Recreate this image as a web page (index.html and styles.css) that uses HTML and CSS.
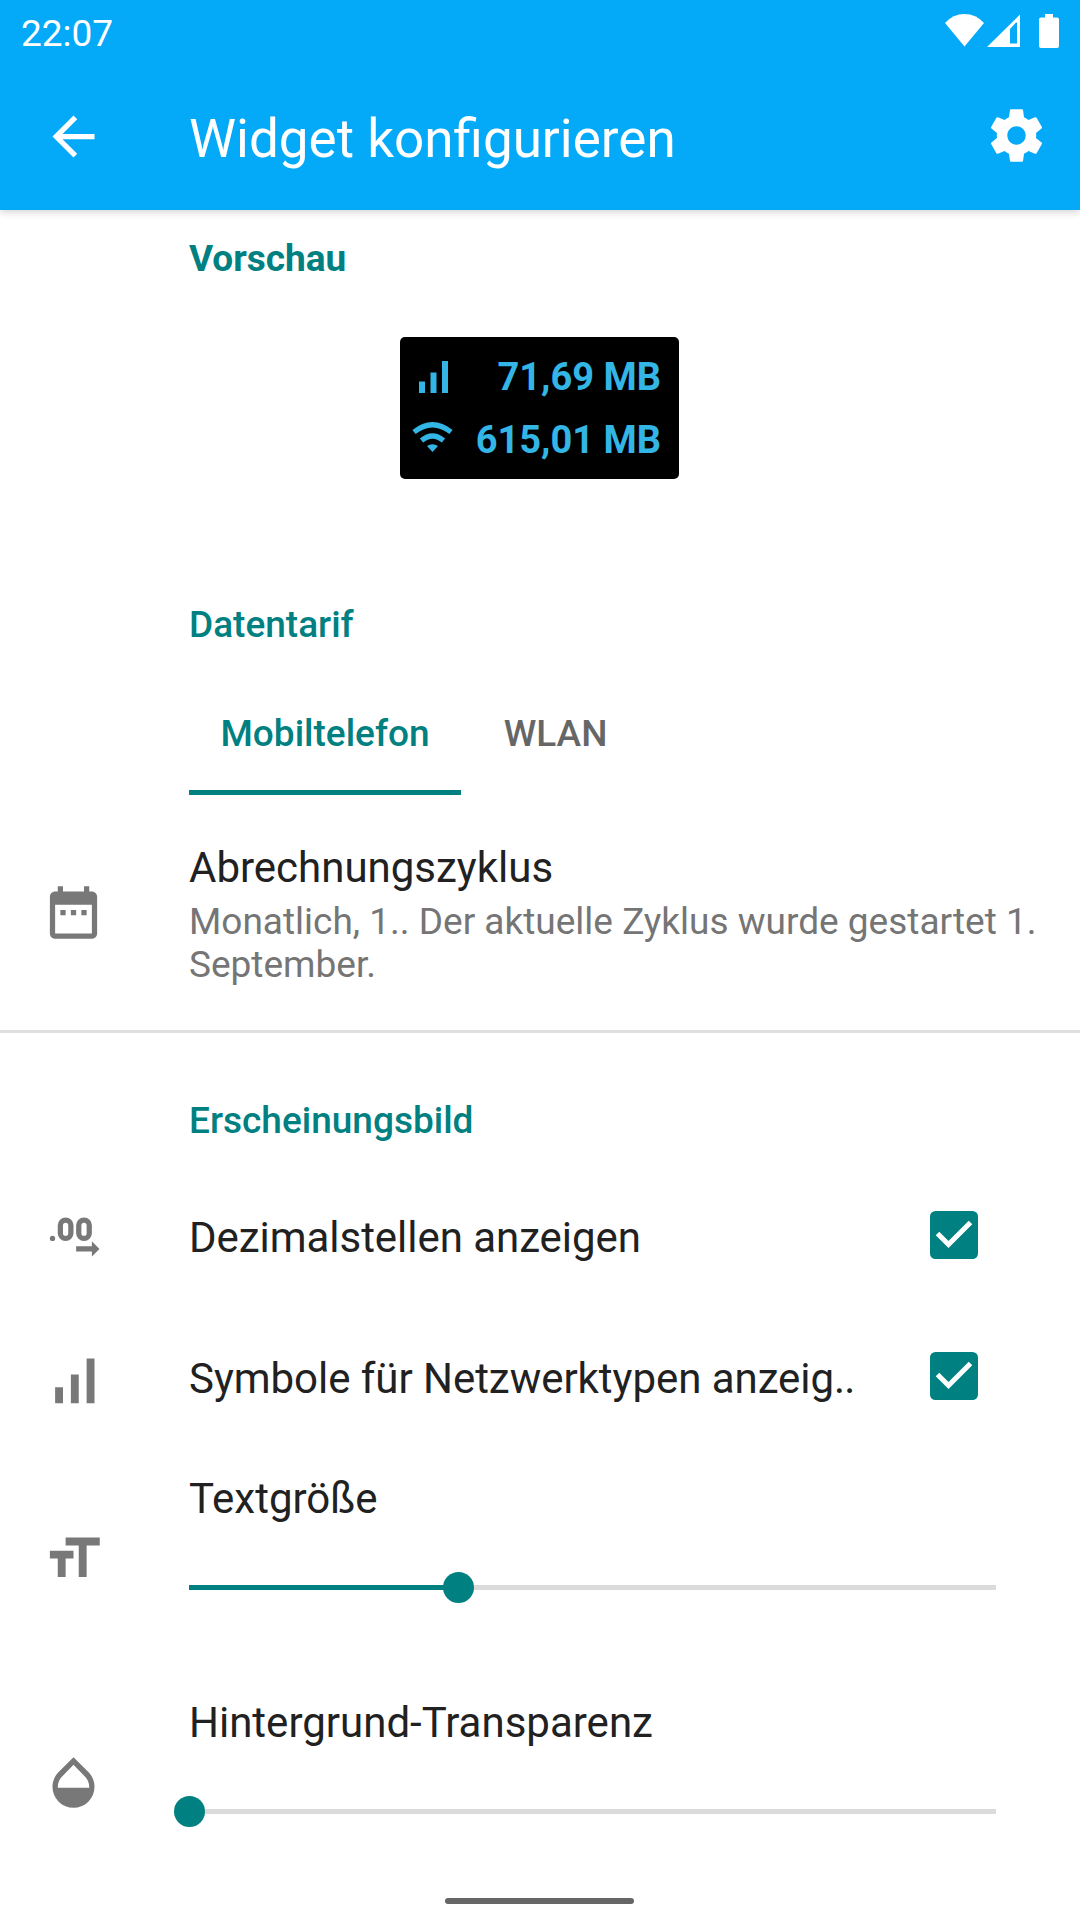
FILE: index.html
```html
<!DOCTYPE html>
<html lang="de">
<head>
<meta charset="utf-8">
<title>Widget konfigurieren</title>
<link rel="stylesheet" href="styles.css">
</head>
<body>
<header class="header">
  <div class="status">
    <span class="time">22:07</span>
    <svg class="status-icons" viewBox="0 0 120 40" aria-hidden="true">
      <path d="M19.500 36.500L0 13Q8 4 19.500 4T39 13z"/>
      <path fill-rule="evenodd" d="M42 37L75 4.500V37zM65 33.500H72V12.500H71L65 19z"/>
      <path d="M100 4h8v3.500h4a2 2 0 0 1 2 2V36a2 2 0 0 1-2 2H96a2 2 0 0 1-2-2V9.500a2 2 0 0 1 2-2h4z"/>
    </svg>
  </div>
  <div class="toolbar">
    <svg class="icon" viewBox="0 0 24 24"><path d="M20 11H7.830l5.590-5.590L12 4l-8 8 8 8 1.410-1.410L7.830 13H20v-2z"/></svg>
    <h1 class="title">Widget konfigurieren</h1>
    <svg class="icon icon-settings" viewBox="0 0 24 24"><path d="M19.430 12.980c.04-.32.07-.64.07-.98s-.03-.66-.07-.98l2.110-1.650c.19-.15.24-.42.12-.64l-2-3.460c-.12-.22-.39-.3-.61-.22l-2.490 1c-.52-.4-1.080-.73-1.690-.98l-.38-2.650C14.460 2.180 14.250 2 14 2h-4c-.25 0-.46.18-.49.42l-.38 2.650c-.61.25-1.170.59-1.690.98l-2.490-1c-.23-.09-.49 0-.61.22l-2 3.460c-.13.22-.07.49.12.64l2.110 1.650c-.04.32-.07.65-.07.98s.03.66.07.98l-2.110 1.650c-.19.15-.24.42-.12.64l2 3.460c.12.22.39.3.61.22l2.490-1c.52.4 1.080.73 1.690.98l.38 2.650c.03.24.24.42.49.42h4c.25 0 .46-.18.49-.42l.38-2.650c.61-.25 1.170-.59 1.690-.98l2.490 1c.23.09.49 0 .61-.22l2-3.460c.12-.22.07-.49-.12-.64l-2.110-1.650zM12 15.500c-1.930 0-3.500-1.570-3.500-3.500s1.570-3.500 3.500-3.500 3.500 1.570 3.500 3.500-1.570 3.500-3.500 3.500z"/></svg>
  </div>
</header>

<main>
  <h2 class="section section-preview">Vorschau</h2>
  <div class="widget">
    <div class="widget-row">
      <svg class="widget-icon" viewBox="0 0 42 42"><path d="M7 25.500h6V37H7zM18.500 16.500h6V37h-6zM30 5h6v32h-6z"/></svg>
      <span>71,69 MB</span>
    </div>
    <div class="widget-row">
      <svg class="widget-icon" viewBox="0 0 42 42">
        <path d="M15 27Q20.500 23.500 26 27L20.500 33z"/>
        <path class="arc" d="M9.500 21.500Q20.500 12.500 31.500 21.500M2 13Q20.500-1.500 39 13"/>
      </svg>
      <span>615,01 MB</span>
    </div>
  </div>

  <h2 class="section section-plan">Datentarif</h2>
  <nav class="tabs">
    <span class="tab tab-active">Mobiltelefon</span>
    <span class="tab">WLAN</span>
  </nav>

  <section class="row row-cycle">
    <svg class="icon" viewBox="0 0 24 24"><path d="M9 11H7v2h2v-2zm4 0h-2v2h2v-2zm4 0h-2v2h2v-2zm2-7h-1V2h-2v2H8V2H6v2H5c-1.110 0-1.990.9-1.990 2L3 20c0 1.100.89 2 2 2h14c1.100 0 2-.9 2-2V6c0-1.100-.9-2-2-2zm0 16H5V9h14v11z"/></svg>
    <div class="cycle-text">
      <div class="label">Abrechnungszyklus</div>
      <div class="summary">Monatlich, 1.. Der aktuelle Zyklus wurde gestartet 1. September.</div>
    </div>
  </section>

  <h2 class="section section-look">Erscheinungsbild</h2>
  <section class="row row-check">
    <svg class="icon" viewBox="0 0 24 24">
      <circle cx="4" cy="13.100" r="1"/>
      <rect class="ring" x="7" y="6.100" width="4" height="7" rx="2"/>
      <rect class="ring" x="14" y="6.100" width="4" height="7" rx="2"/>
      <path d="M13 16.100h6v-1.900l2.900 2.900-2.900 2.900v-1.900h-6z"/>
    </svg>
    <div class="label">Dezimalstellen anzeigen</div>
    <svg class="checkbox" viewBox="0 0 48 48"><rect width="48" height="48" rx="5.500"/><path d="M7.500 22.500L18.500 33.500L40.500 11.500"/></svg>
  </section>
  <section class="row row-check">
    <svg class="icon" viewBox="0 0 24 24"><path d="M5 16.100h3v6.100H5zM11 11.200h3v11h-3zM17 5.100h3v17.100h-3z"/></svg>
    <div class="label">Symbole für Netzwerktypen anzeig<span class="ellipsis">..</span></div>
    <svg class="checkbox" viewBox="0 0 48 48"><rect width="48" height="48" rx="5.500"/><path d="M7.500 22.500L18.500 33.500L40.500 11.500"/></svg>
  </section>
  <section class="row row-slider">
    <svg class="icon" viewBox="0 0 24 24"><path d="M9 4v3h5v12h3V7h5V4H9zm-6 8h3v7h3v-7h3V9H3v3z"/></svg>
    <div class="slider-body">
      <div class="label">Textgröße</div>
      <div class="track"><div class="fill" style="width:33.33%"></div><div class="knob" style="left:33.33%"></div></div>
    </div>
  </section>
  <section class="row row-slider">
    <svg class="icon" viewBox="0 0 24 24"><path d="M17.660 8L12 2.350 6.340 8C4.780 9.560 4 11.640 4 13.640s.78 4.110 2.340 5.670 3.610 2.350 5.660 2.350 4.100-.79 5.660-2.350S20 15.640 20 13.640 19.220 9.560 17.660 8zM6 14c.01-2 .62-3.270 1.760-4.400L12 5.270l4.240 4.380C17.380 10.770 17.990 12 18 14H6z"/></svg>
    <div class="slider-body">
      <div class="label">Hintergrund-Transparenz</div>
      <div class="track"><div class="knob" style="left:0%"></div></div>
    </div>
  </section>
</main>
<div class="home-bar"></div>
</body>
</html>
```
FILE: styles.css
```css
* { box-sizing: border-box; }

body {
  margin: 0;
  width: 1080px;
  height: 1920px;
  overflow: hidden;
  background: #fff;
  color: #212121;
  font-family: Roboto, "Liberation Sans", sans-serif;
  font-size: 37px;
}

h1, h2 { margin: 0; }
svg { display: block; flex: none; }

.header {
  height: 210px;
  background: #04a9f7;
  color: #fff;
  box-shadow: 0 2px 8px rgba(0, 0, 0, .18);
}

.status {
  display: flex;
  justify-content: space-between;
  height: 63px;
  padding: 11px 15px 0 21px;
}

.time { line-height: 45px; }

.status-icons {
  width: 120px;
  height: 40px;
  margin-top: -1px;
  fill: #fff;
}

.toolbar {
  display: flex;
  align-items: center;
  height: 147px;
  padding: 0 32px 0 42px;
}

.icon {
  width: 63px;
  height: 63px;
  fill: #787878;
}

.toolbar .icon { fill: #fff; }
.toolbar .icon-settings { margin-bottom: 2px; }

.title {
  flex: 1;
  padding: 4px 0 0 84px;
  font-size: 53px;
  font-weight: 400;
  line-height: 62px;
}

.section {
  margin-left: 189px;
  color: #008080;
  font-size: 37px;
  font-weight: 500;
  line-height: 44px;
}

.section-preview { margin-top: 27px; font-weight: 700; }
.section-plan { margin-top: 124px; }
.section-look { margin-top: 66px; }

.widget {
  width: 279px;
  height: 142px;
  margin: 56px 0 0 400px;
  padding: 8px 18px 0 12px;
  border-radius: 5px;
  background: #000;
  color: #33b5e5;
  font-size: 38px;
  font-weight: 700;
}

.widget-row {
  display: flex;
  align-items: center;
  justify-content: space-between;
  height: 63px;
}

.widget-icon {
  width: 42px;
  height: 42px;
  fill: #33b5e5;
}

.arc { fill: none; stroke: #33b5e5; stroke-width: 5.2; }

.tabs {
  display: flex;
  height: 126px;
  margin: 22px 0 0 189px;
  font-weight: 500;
  color: #666;
}

.tab {
  min-width: 189px;
  padding: 43px 31.5px 0;
  border-bottom: 5px solid transparent;
  line-height: 44px;
  text-align: center;
}

.tab-active { border-color: #008080; color: #008080; }

.row {
  display: flex;
  align-items: center;
  padding-left: 42px;
}

.label { font-size: 42px; line-height: 49px; }

.row-cycle { height: 238px; border-bottom: 3px solid #e0e0e0; }

.cycle-text {
  align-self: flex-start;
  flex: 1;
  padding: 48px 42px 0 84px;
}

.summary { margin-top: 8px; color: #757575; line-height: 43px; }

.section-look + .row-check { margin-top: 22px; }
.row-check { height: 141px; padding-right: 102px; }

.row-check .label {
  flex: 1;
  padding: 4px 0 0 84px;
  letter-spacing: -.04px;
  white-space: nowrap;
}

.ellipsis { letter-spacing: -1px; }

.checkbox { width: 48px; height: 48px; margin-bottom: 1px; fill: #008080; }
.checkbox path { fill: none; stroke: #fff; stroke-width: 5; }

.ring { fill: none; stroke: #787878; stroke-width: 2; }

.row-slider { height: 224px; }
.row-slider .icon { margin-bottom: 1px; }

.slider-body {
  align-self: flex-start;
  width: 807px;
  margin-left: 84px;
  padding-top: 27px;
}

.track {
  position: relative;
  height: 5px;
  margin-top: 62px;
  background: #dbdbdb;
}

.fill { height: 5px; background: #008080; }

.knob {
  position: absolute;
  top: -13px;
  width: 31px;
  height: 31px;
  margin-left: -15px;
  border-radius: 50%;
  background: #008080;
}

.home-bar {
  width: 189px;
  height: 6px;
  margin: 3px 0 0 445px;
  border-radius: 3px;
  background: #666;
}
```
